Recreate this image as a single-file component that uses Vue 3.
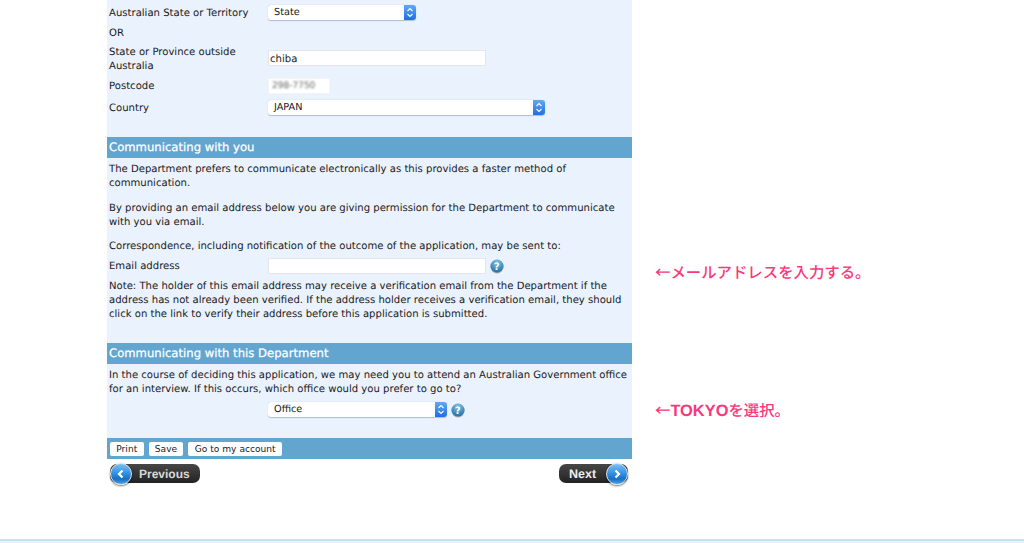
<script setup>
const rowsTop = [
  { label: 'Australian State or Territory', kind: 'select', value: 'State', width: 148, cls: 'r1' },
  { label: 'OR', kind: 'none', cls: 'r2' },
  { label: 'State or Province outside Australia', kind: 'input', value: 'chiba', width: 218, cls: 'r3' },
  { label: 'Postcode', kind: 'blur', value: '298-7750', width: 62, cls: 'r4' },
  { label: 'Country', kind: 'select', value: 'JAPAN', width: 277, cls: 'r5' }
]
</script>

<template>
  <div class="page">
    <main class="panel">
      <section class="form-top">
        <div v-for="r in rowsTop" :key="r.label" class="row" :class="r.cls">
          <div class="label">{{ r.label }}</div>
          <div v-if="r.kind === 'select'" class="select" :style="{ width: r.width + 'px' }">
            <span class="select-text">{{ r.value }}</span>
            <span class="stepper">
              <svg width="8" height="11" viewBox="0 0 8 11"><path d="M1.500 4 4 1.500 6.500 4M1.500 7 4 9.500 6.500 7" fill="none" stroke="#fff" stroke-width="1.100"/></svg>
            </span>
          </div>
          <div v-else-if="r.kind === 'input'" class="input" :style="{ width: r.width + 'px' }">{{ r.value }}</div>
          <div v-else-if="r.kind === 'blur'" class="input blur-input" :style="{ width: r.width + 'px' }"><span class="blurred">{{ r.value }}</span></div>
        </div>
      </section>

      <h2 class="bar">Communicating with you</h2>
      <section class="comm">
        <p>The Department prefers to communicate electronically as this provides a faster method of communication.</p>
        <p class="gap-a">By providing an email address below you are giving permission for the Department to communicate with you via email.</p>
        <p class="gap-b">Correspondence, including notification of the outcome of the application, may be sent to:</p>
        <div class="row email">
          <div class="label">Email address</div>
          <div class="input email-input"></div>
          <svg class="help" width="14" height="14" viewBox="0 0 14 14">
            <defs><radialGradient id="h1" cx="50%" cy="25%" r="75%"><stop offset="0" stop-color="#8cc6e6"/><stop offset="1" stop-color="#1f6fa6"/></radialGradient></defs>
            <circle cx="7" cy="7" r="6.500" fill="url(#h1)"/>
            <text x="7" y="10.500" text-anchor="middle" class="help-q">?</text>
          </svg>
        </div>
        <p class="note">Note: The holder of this email address may receive a verification email from the Department if the address has not already been verified. If the address holder receives a verification email, they should click on the link to verify their address before this application is submitted.</p>
      </section>

      <h2 class="bar">Communicating with this Department</h2>
      <section class="dept">
        <p>In the course of deciding this application, we may need you to attend an Australian Government office for an interview. If this occurs, which office would you prefer to go to?</p>
        <div class="office">
          <div class="select office-select">
            <span class="select-text">Office</span>
            <span class="stepper">
              <svg width="8" height="11" viewBox="0 0 8 11"><path d="M1.500 4 4 1.500 6.500 4M1.500 7 4 9.500 6.500 7" fill="none" stroke="#fff" stroke-width="1.100"/></svg>
            </span>
          </div>
          <svg class="help" width="14" height="14" viewBox="0 0 14 14">
            <defs><radialGradient id="h2" cx="50%" cy="25%" r="75%"><stop offset="0" stop-color="#8cc6e6"/><stop offset="1" stop-color="#1f6fa6"/></radialGradient></defs>
            <circle cx="7" cy="7" r="6.500" fill="url(#h2)"/>
            <text x="7" y="10.500" text-anchor="middle" class="help-q">?</text>
          </svg>
        </div>
      </section>

      <div class="toolbar">
        <button class="btn">Print</button>
        <button class="btn">Save</button>
        <button class="btn">Go to my account</button>
      </div>
      <nav class="pager">
        <div class="nav-btn prev">
          <span class="orb">
            <svg width="12" height="12" viewBox="0 0 12 12"><path d="M7.500 2.500 4 6l3.500 3.500" fill="none" stroke="#fff" stroke-width="2.200"/></svg>
          </span>
          <span>Previous</span>
        </div>
        <div class="nav-btn next">
          <span>Next</span>
          <span class="orb">
            <svg width="12" height="12" viewBox="0 0 12 12"><path d="M4.500 2.500 8 6 4.500 9.500" fill="none" stroke="#fff" stroke-width="2.200"/></svg>
          </span>
        </div>
      </nav>
    </main>

    <aside class="notes">
      <div class="ann">←メールアドレスを入力する。</div>
      <div class="ann">←<span class="latin">TOKYO</span>を選択。</div>
    </aside>
  </div>
  <footer class="foot"></footer>
</template>

<style>
html, body { margin: 0; padding: 0; background: #fff; overflow: hidden; }
</style>

<style scoped>
.page {
  display: flex;
  height: 539px;
  padding-left: 107px;
  box-sizing: border-box;
  font-family: "DejaVu Sans", sans-serif;
  font-size: 10.08px;
  color: #1a1a1a;
  overflow: hidden;
  text-rendering: geometricPrecision;
}
.panel { width: 525px; flex: none; }
.form-top, .comm, .dept { background: #eaf2fe; padding: 0 2px; }
.form-top { height: 137px; box-sizing: border-box; padding-top: 5px; }
.row { display: flex; align-items: center; }
.label { width: 159px; flex: none; line-height: 14px; box-sizing: border-box; padding-top: 4px; }
.r1 { height: 15px; }
.r2 { height: 14px; margin-top: 5px; }
.r3 { height: 28px; margin-top: 5px; }
.r4 { height: 16px; margin-top: 6px; }
.r5 { height: 15px; margin-top: 6px; }
.r1 .label, .r4 .label, .r5 .label { padding-top: 2px; }
.r3 .label { width: 146px; margin-right: 13px; }
.select {
  height: 15px;
  box-sizing: border-box;
  background: #fff;
  border-radius: 3px;
  box-shadow: 0 0.5px 1px rgba(90, 110, 140, .4);
  display: flex;
  align-items: center;
  justify-content: space-between;
  overflow: hidden;
  font-size: 9.7px;
}
.select-text { padding-left: 6px; }
.stepper {
  width: 12px;
  height: 100%;
  display: flex;
  align-items: center;
  justify-content: center;
  background: linear-gradient(#62a8f8, #1f6fe2);
}
.input {
  height: 16px;
  box-sizing: border-box;
  background: #fff;
  border: 1px solid #e3e6ea;
  padding-left: 1px;
  line-height: 18px;
  overflow: hidden;
}
.blur-input { border-color: #f2f4f8; line-height: 14px; }
.blurred { filter: blur(1.1px); color: #666; font-size: 9px; padding-left: 2px; display: inline-block; }
.bar {
  margin: 0;
  height: 21px;
  line-height: 21px;
  background: #62a5cf;
  color: #fff;
  font-size: 11.65px;
  font-weight: 400;
  padding-left: 2px;
  -webkit-text-stroke: 0.25px #fff;
}
.comm { height: 185px; box-sizing: border-box; padding-top: 5px; }
.comm p, .dept p { margin: 0; line-height: 14px; }
.comm .gap-a { margin-top: 11px; }
.comm .gap-b { margin-top: 10px; }
.email { height: 16px; margin-top: 4px; }
.email .label { padding-top: 2px; }
.email-input { width: 218px; }
.help { margin-left: 4px; flex: none; filter: drop-shadow(0 1px 0.5px rgba(0, 0, 0, .3)); }
.help-q { font: bold 10px "DejaVu Sans", sans-serif; fill: #fff; }
.comm .note { margin-top: 6px; }
.dept { height: 74px; box-sizing: border-box; padding-top: 5px; }
.office { display: flex; align-items: center; padding-left: 159px; margin-top: 5px; }
.office-select { width: 179px; }
.toolbar {
  height: 21px;
  background: #62a5cf;
  display: flex;
  align-items: center;
  gap: 5px;
  padding-left: 3px;
  box-sizing: border-box;
}
.btn {
  height: 14px;
  padding: 0 6.3px;
  border: 0;
  border-radius: 2px;
  background: #fff;
  font: 9.1px "DejaVu Sans", sans-serif;
  color: #1a1a1a;
  line-height: 14px;
}
.pager { display: flex; justify-content: space-between; padding: 5px 4px 0 3px; }
.nav-btn {
  height: 19px;
  background: linear-gradient(#474747, #222);
  border-radius: 7px;
  color: #d8d8d8;
  font: bold 12px "Liberation Sans", sans-serif;
  display: flex;
  align-items: center;
}
.prev { width: 90px; gap: 7px; }
.next { width: 69px; padding-left: 10px; box-sizing: border-box; justify-content: space-between; }
.next span:first-child { font-size: 12.5px; color: #eee; }
.orb {
  width: 22px;
  height: 22px;
  border-radius: 50%;
  background: linear-gradient(#7cc0f2 0%, #3592e4 45%, #1670c6 75%, #4aa0e6 100%);
  border: 1px solid #dfe3e7;
  box-sizing: border-box;
  box-shadow: 0 1px 2px rgba(0, 0, 0, .55);
  display: flex;
  align-items: center;
  justify-content: center;
  flex: none;
}
.notes {
  padding: 262px 0 0 23px;
  font-family: "Noto Sans CJK JP", sans-serif;
  font-size: 15.4px;
  font-weight: 500;
  color: #f8397c;
  display: flex;
  flex-direction: column;
  gap: 118px;
}
.ann { line-height: 20px; white-space: nowrap; }
.latin { font-family: "Liberation Sans", sans-serif; font-weight: 700; font-size: 16.4px; line-height: 20px; }
.foot {
  height: 4px;
  background: #e4f3fb;
  border-top: 2px solid #c5e0ef;
  box-sizing: border-box;
}
</style>
